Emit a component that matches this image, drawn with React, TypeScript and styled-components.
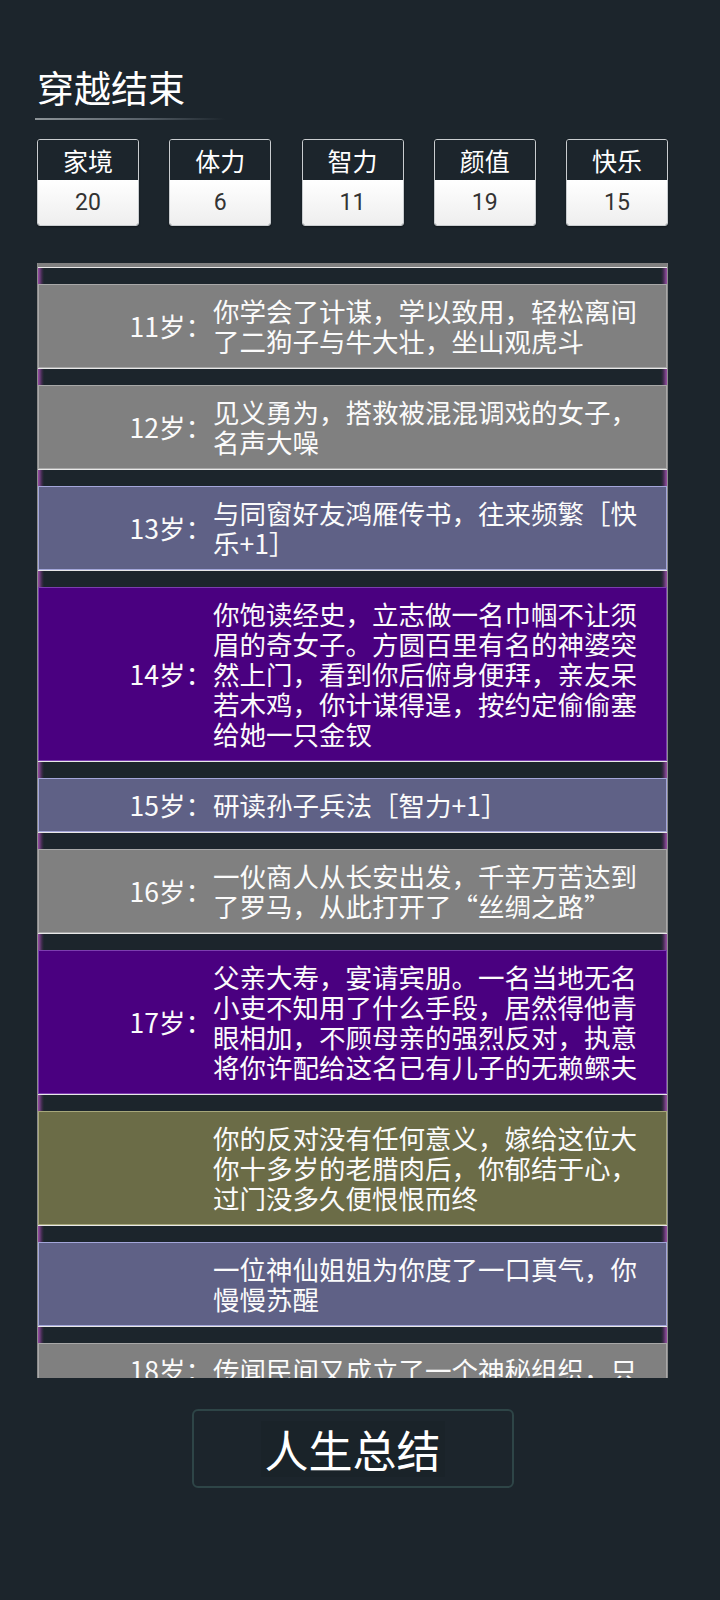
import styled, { createGlobalStyle } from "styled-components";

type Tone = "gray" | "blue" | "purple" | "olive";

const tones: Record<Tone, { bg: string; border: string }> = {
  gray: { bg: "#808080", border: "#a8a8a8" },
  blue: { bg: "#5f6186", border: "#a3a6da" },
  purple: { bg: "#4a0080", border: "#7c3db0" },
  olive: { bg: "#6b6c47", border: "#a6a77a" },
};

const stats = [
  { label: "家境", value: 20 },
  { label: "体力", value: 6 },
  { label: "智力", value: 11 },
  { label: "颜值", value: 19 },
  { label: "快乐", value: 15 },
];

const events: { age?: number; text: string; tone: Tone }[] = [
  { age: 11, text: "你学会了计谋，学以致用，轻松离间了二狗子与牛大壮，坐山观虎斗", tone: "gray" },
  { age: 12, text: "见义勇为，搭救被混混调戏的女子，名声大噪", tone: "gray" },
  { age: 13, text: "与同窗好友鸿雁传书，往来频繁［快乐+1］", tone: "blue" },
  {
    age: 14,
    text: "你饱读经史，立志做一名巾帼不让须眉的奇女子。方圆百里有名的神婆突然上门，看到你后俯身便拜，亲友呆若木鸡，你计谋得逞，按约定偷偷塞给她一只金钗",
    tone: "purple",
  },
  { age: 15, text: "研读孙子兵法［智力+1］", tone: "blue" },
  { age: 16, text: "一伙商人从长安出发，千辛万苦达到了罗马，从此打开了“丝绸之路”", tone: "gray" },
  {
    age: 17,
    text: "父亲大寿，宴请宾朋。一名当地无名小吏不知用了什么手段，居然得他青眼相加，不顾母亲的强烈反对，执意将你许配给这名已有儿子的无赖鳏夫",
    tone: "purple",
  },
  { text: "你的反对没有任何意义，嫁给这位大你十多岁的老腊肉后，你郁结于心，过门没多久便恨恨而终", tone: "olive" },
  { text: "一位神仙姐姐为你度了一口真气，你慢慢苏醒", tone: "blue" },
  { age: 18, text: "传闻民间又成立了一个神秘组织，只", tone: "gray" },
];

const GlobalStyle = createGlobalStyle`
  html, body {
    margin: 0;
    padding: 0;
    background: #1c252c;
  }
  body {
    font-family: "Noto Sans CJK SC", "Noto Sans", sans-serif;
    color: #fff;
  }
`;

const Page = styled.div`
  width: 631px;
  margin-left: 37px;
  padding-top: 64px;
  padding-bottom: 60px;
  display: flex;
  flex-direction: column;
`;

const Title = styled.h1`
  margin: 0;
  font-size: 37px;
  font-weight: 400;
  line-height: 46px;
  color: #fff;
`;

const Underline = styled.div`
  width: 190px;
  height: 2px;
  margin: 8px 0 0 -2px;
  background: linear-gradient(to right, #8d9498 0%, #59626a 55%, rgba(28, 37, 44, 0) 100%);
`;

const StatRow = styled.div`
  display: flex;
  justify-content: space-between;
  margin-top: 19px;
`;

const StatBox = styled.div`
  width: 102px;
  height: 87px;
  box-sizing: border-box;
  border: 1px solid #c9cdd0;
  border-radius: 3px;
  overflow: hidden;
  display: flex;
  flex-direction: column;
  box-shadow: 0 1px 2px rgba(0, 0, 0, 0.4);
`;

const StatLabel = styled.div`
  height: 40px;
  background: #1c252c;
  color: #fff;
  font-size: 25px;
  line-height: 40px;
  text-align: center;
`;

const StatValue = styled.div`
  flex: 1;
  background: linear-gradient(to bottom, #ffffff, #eeeeee);
  color: #333;
  font-family: "Roboto", "Noto Sans", sans-serif;
  font-size: 23px;
  display: flex;
  align-items: center;
  justify-content: center;
`;

const List = styled.div`
  margin-top: 37px;
  height: 1115px;
  overflow: hidden;
  background: #808080;
  border-left: 1px solid #8c8c8c;
  border-right: 1px solid #8c8c8c;
  box-sizing: border-box;
  padding-top: 4px;
  display: flex;
  flex-direction: column;
`;

const Separator = styled.div`
  flex: none;
  height: 16px;
  border-top: 1px solid #e8e8e8;
  background: linear-gradient(
    to right,
    #9a4fa8 0px,
    #3a2a48 4px,
    #1c252c 6px,
    #1c252c calc(100% - 6px),
    #3a2a48 calc(100% - 4px),
    #9a4fa8 100%
  );
`;

const Entry = styled.div<{ $tone: Tone }>`
  flex: none;
  display: grid;
  grid-template-columns: 173px 436px;
  align-items: center;
  padding: 11px 0;
  background: ${(p) => tones[p.$tone].bg};
  border: 1px solid ${(p) => tones[p.$tone].border};
  color: #fbfbfb;
  font-size: 26.5px;
  line-height: 30px;
`;

const Age = styled.div`
  text-align: right;
  white-space: nowrap;
`;

const Text = styled.div`
  padding-left: 1px;
`;

const ButtonWrap = styled.div`
  display: flex;
  justify-content: center;
  margin-top: 31px;
`;

const SummaryButton = styled.button`
  width: 322px;
  height: 79px;
  box-sizing: border-box;
  border: 2px solid #2e4547;
  border-radius: 6px;
  background: #1c252c;
  color: #fff;
  font-family: "Noto Sans CJK SC", "Noto Sans", sans-serif;
  font-size: 44px;
  display: flex;
  align-items: center;
  justify-content: center;
  padding: 0;
  cursor: pointer;

  span {
    background: #1a2329;
    padding: 0 4px;
    line-height: 56px;
  }
`;

export default function App() {
  return (
    <>
      <GlobalStyle />
      <Page>
        <Title>穿越结束</Title>
        <Underline />
        <StatRow>
          {stats.map((s) => (
            <StatBox key={s.label}>
              <StatLabel>{s.label}</StatLabel>
              <StatValue>{s.value}</StatValue>
            </StatBox>
          ))}
        </StatRow>
        <List>
          {events.map((e, i) => (
            <div key={i}>
              <Separator />
              <Entry $tone={e.tone}>
                <Age>{e.age !== undefined ? `${e.age}岁：` : ""}</Age>
                <Text>{e.text}</Text>
              </Entry>
            </div>
          ))}
        </List>
        <ButtonWrap>
          <SummaryButton>
            <span>人生总结</span>
          </SummaryButton>
        </ButtonWrap>
      </Page>
    </>
  );
}
